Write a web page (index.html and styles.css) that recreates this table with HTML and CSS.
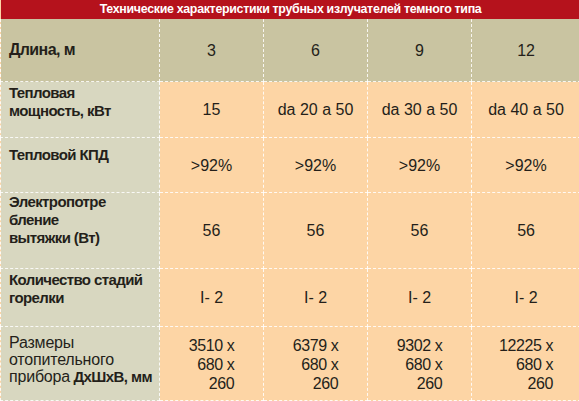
FILE: index.html
```html
<!DOCTYPE html>
<html lang="ru">
<head>
    <meta charset="UTF-8">
    <meta name="viewport" content="width=device-width, initial-scale=1.0">
    <title>Технические характеристики</title>
    <link rel="stylesheet" href="styles.css">
</head>
<body>
    <table class="specs">
        <colgroup>
            <col class="col-label">
            <col class="col-val">
            <col class="col-val">
            <col class="col-val">
            <col class="col-last">
        </colgroup>
        <thead>
            <tr class="title-row">
                <th colspan="5">Технические характеристики трубных излучателей темного типа</th>
            </tr>
            <tr class="head-row">
                <th class="label">Длина, м</th>
                <th>3</th>
                <th>6</th>
                <th>9</th>
                <th>12</th>
            </tr>
        </thead>
        <tbody>
            <tr class="row-power">
                <td class="label">Тепловая<br>мощность, кВт</td>
                <td>15</td>
                <td>da 20 a 50</td>
                <td>da 30 a 50</td>
                <td>da 40 a 50</td>
            </tr>
            <tr class="row-kpd">
                <td class="label">Тепловой КПД</td>
                <td>&gt;92%</td>
                <td>&gt;92%</td>
                <td>&gt;92%</td>
                <td>&gt;92%</td>
            </tr>
            <tr class="row-elec">
                <td class="label">Электропотре<br>бление<br>вытяжки (Вт)</td>
                <td>56</td>
                <td>56</td>
                <td>56</td>
                <td>56</td>
            </tr>
            <tr class="row-stages">
                <td class="label">Количество стадий<br>горелки</td>
                <td>I- 2</td>
                <td>I- 2</td>
                <td>I- 2</td>
                <td>I- 2</td>
            </tr>
            <tr class="row-size">
                <td class="label"><span class="thin">Размеры<br>отопительного<br>прибора</span> ДхШхВ, мм</td>
                <td><span class="dims">3510 x<br>680 x<br>260</span></td>
                <td><span class="dims">6379 x<br>680 x<br>260</span></td>
                <td><span class="dims">9302 x<br>680 x<br>260</span></td>
                <td><span class="dims">12225 x<br>680 x<br>260</span></td>
            </tr>
        </tbody>
    </table>
</body>
</html>
```

FILE: styles.css
```css
body {
    margin: 0;
    padding: 0;
    overflow: hidden;
    background-color: #fdd5a5;
    font-family: 'Liberation Sans', Arial, sans-serif;
    color: #241f1a;
}
.specs {
    width: 580px;
    table-layout: fixed;
    border-collapse: collapse;
}
.col-label {
    width: 159px;
}
.col-val {
    width: 104px;
}
.col-last {
    width: 109px;
}
.specs th, .specs td {
    border: 1px dashed rgba(255, 255, 255, 0.85);
    padding: 0;
    text-align: center;
    vertical-align: middle;
    font-size: 16px;
    font-weight: normal;
    line-height: 19px;
    background-color: #fdd5a5;
}
.title-row th {
    height: 19px;
    border: none;
    background-color: #b5121c;
    color: #fff;
    font-size: 12.4px;
    font-weight: bold;
    line-height: 19px;
    letter-spacing: -0.3px;
}
.head-row th {
    height: 62px;
    border-top: none;
    background-color: #c9c4a1;
}
.specs .label {
    text-align: left;
    vertical-align: top;
    padding: 2px 0 0 8px;
    font-size: 15px;
    font-weight: bold;
    line-height: 18px;
    letter-spacing: -0.6px;
    background-color: #d8d7c0;
}
.head-row .label {
    vertical-align: middle;
    padding-top: 0;
    font-size: 16px;
    background-color: #c9c4a1;
}
.row-power {
    height: 56px;
}
.row-kpd {
    height: 55px;
}
.row-kpd .label {
    padding-top: 8px;
}
.row-elec {
    height: 76px;
}
.row-elec .label {
    padding-top: 0;
}
.row-stages {
    height: 58px;
}
.row-size {
    height: 74px;
}
.row-size .label {
    padding-top: 7px;
    line-height: 17px;
}
.thin {
    font-size: 16px;
    font-weight: normal;
    letter-spacing: -0.2px;
}
.dims {
    display: inline-block;
    text-align: right;
    letter-spacing: -0.4px;
    padding-top: 2px;
}
```
